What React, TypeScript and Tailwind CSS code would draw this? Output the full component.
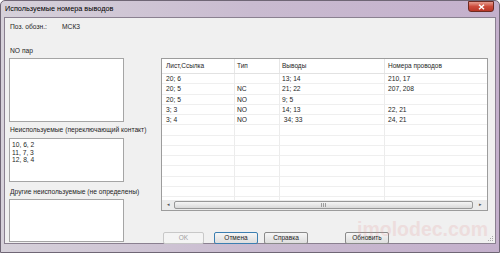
import React from "react";

const rows: string[][] = [
  ["20; 6", "", "13; 14", "210, 17"],
  ["20; 5", "NC", "21; 22", "207, 208"],
  ["20; 5", "NO", "9; 5", ""],
  ["3; 3", "NO", "14; 13", "22, 21"],
  ["3; 4", "NO", " 34; 33", "24, 21"],
];

const headers = ["Лист,Ссылка", "Тип", "Выводы", "Номера проводов"];
const pads = ["pl-[4px]", "pl-[2px]", "pl-[2px]", "pl-[3px]"];

function Cell({ text, col }: { text: string; col: number }) {
  return (
    <div
      className={`${pads[col]} h-[10.25px] leading-[10px] whitespace-pre border-b border-[#efefef] ${
        col < 3 ? "border-r" : ""
      } border-r-[#ececec]`}
    >
      {text}
    </div>
  );
}

function Button({ label, disabled, focused }: { label: string; disabled?: boolean; focused?: boolean }) {
  return (
    <div
      className={`h-[12px] flex items-center justify-center rounded-[2px] border text-[6.5px] leading-none ${
        disabled
          ? "border-[#c8c8c8] text-[#a0a0a0] bg-[#f4f4f4]"
          : focused
          ? "border-[#3c7fb1] bg-linear-to-b from-[#f6f6f6] to-[#dedede]"
          : "border-[#8a8a8a] bg-linear-to-b from-[#f6f6f6] to-[#dedede]"
      }`}
    >
      {label}
    </div>
  );
}

export default function App() {
  const emptyRows = Array.from({ length: 8 }, () => ["", "", "", ""]);
  const allRows = [...rows, ...emptyRows];

  return (
    <div
      className="w-[500px] h-[255px] bg-white text-[#1e1e1e] overflow-hidden relative"
      style={{ fontFamily: '"Liberation Sans", Arial, sans-serif' }}
    >
      {/* window frame */}
      <div className="w-[500px] h-[253px] border border-[#6f6675] rounded-t-[5px] bg-linear-to-r from-[#d6d1da] via-[#c9bbd0] to-[#c4b0cc] flex flex-col">
        {/* title bar */}
        <div className="h-[16px] flex items-center justify-between relative">
          <span className="pl-[4px] text-[7.3px] text-black">Используемые номера выводов</span>
          <div className="absolute right-[5px] top-0 w-[26px] h-[11px] rounded-b-[3px] border border-[#6e2a22] bg-linear-to-b from-[#e49b8f] via-[#cc4b3c] to-[#b83626] flex items-center justify-center">
            <svg width="7" height="6" viewBox="0 0 7 6">
              <path d="M1 0.8 L6 5.2 M6 0.8 L1 5.2" stroke="#fff" strokeWidth="1.5" />
            </svg>
          </div>
        </div>

        {/* client area */}
        <div className="mx-[3px] h-[227px] border border-[#8a8090] bg-[#f0f0f0] flex flex-col relative text-[6.7px]">
          <div className="mt-[4px] h-[10px] flex items-center pl-[5px] leading-[10px]">
            <span className="w-[52px]">Поз. обозн.:</span>
            <span>МСК3</span>
          </div>

          <div className="flex mt-[14px] pl-[4px]">
            {/* left column */}
            <div className="w-[115px] flex flex-col">
              <div className="h-[10px] leading-[10px] pl-[1px]">NO пар</div>
              <div className="mt-[2px] h-[64px] bg-white border border-[#a5a5a5]" />
              <div className="mt-[3px] h-[10px] leading-[10px] pl-[1px] whitespace-nowrap">
                Неиспользуемые (переключающий контакт)
              </div>
              <div className="mt-[3px] h-[44px] bg-white border border-[#a5a5a5] pl-[2px] pt-[2px] leading-[7.7px]">
                <div>10, 6, 2</div>
                <div>11, 7, 3</div>
                <div>12, 8, 4</div>
              </div>
              <div className="mt-[5px] h-[10px] leading-[10px] pl-[1px] whitespace-nowrap">
                Другие неиспользуемые (не определены)
              </div>
              <div className="mt-[2px] h-[43px] bg-white border border-[#a5a5a5]" />
            </div>

            {/* right column */}
            <div className="ml-[37px] w-[327px] flex flex-col">
              <div className="mt-[12px] h-[153px] bg-white border border-[#9c9c9c] flex flex-col">
                <div className="grid grid-cols-[73px_45px_105px_1fr] h-[15px] border-b border-[#e2e2e2]">
                  {headers.map((h, i) => (
                    <div
                      key={h}
                      className={`${pads[i]} flex items-center text-[6.5px] ${i < 3 ? "border-r border-[#e6e6e6]" : ""}`}
                    >
                      {h}
                    </div>
                  ))}
                </div>
                <div className="flex-1 overflow-hidden grid grid-cols-[73px_45px_105px_1fr] content-start">
                  {allRows.map((r, ri) =>
                    r.map((c, ci) => <Cell key={`${ri}-${ci}`} text={c} col={ci} />)
                  )}
                </div>
                {/* horizontal scrollbar */}
                <div className="h-[10px] bg-[#ebebeb] flex items-center px-[1px] gap-[1px]">
                  <div className="w-[10px] flex items-center justify-center text-[5px] text-[#555]">◂</div>
                  <div className="flex-1 h-[8px] rounded-[2px] border border-[#979797] bg-linear-to-b from-[#f5f5f5] to-[#d9d9d9] flex items-center justify-center">
                    <svg width="6" height="4" viewBox="0 0 6 4">
                      <path d="M0.5 0 V4 M2.5 0 V4 M4.5 0 V4" stroke="#8a8a8a" strokeWidth="0.8" />
                    </svg>
                  </div>
                  <div className="w-[12px] flex items-center justify-center text-[5px] text-[#555]">▸</div>
                </div>
              </div>

              <div className="mt-[21px] flex items-center">
                <div className="ml-[2px] w-[41px]">
                  <Button label="OK" disabled />
                </div>
                <div className="ml-[10px] w-[44px]">
                  <Button label="Отмена" focused />
                </div>
                <div className="ml-[6px] w-[44px]">
                  <Button label="Справка" />
                </div>
                <div className="ml-[37px] w-[44px]">
                  <Button label="Обновить" />
                </div>
              </div>
            </div>
          </div>

          {/* resize grip */}
          <svg className="absolute right-[1px] bottom-[1px]" width="7" height="7" viewBox="0 0 7 7">
            <g fill="#a8a8a8">
              <rect x="5" y="1" width="1" height="1" />
              <rect x="3" y="3" width="1" height="1" />
              <rect x="5" y="3" width="1" height="1" />
              <rect x="1" y="5" width="1" height="1" />
              <rect x="3" y="5" width="1" height="1" />
              <rect x="5" y="5" width="1" height="1" />
            </g>
          </svg>
        </div>
      </div>

      {/* watermark */}
      <div className="absolute left-[357px] top-[220px] text-[19.5px] font-bold whitespace-nowrap text-[#e48a8a] opacity-[0.18] leading-none pointer-events-none">
        imolodec.com
      </div>
    </div>
  );
}
